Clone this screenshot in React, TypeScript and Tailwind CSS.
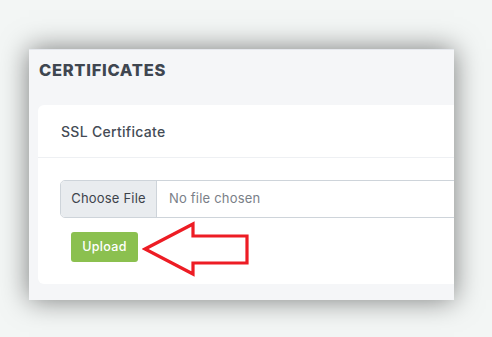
export default function App() {
    return (
        <div
            className="w-[492px] h-[337px] bg-[#f3f6f5] pt-[49px] pl-[29px] overflow-hidden"
            style={{ fontFamily: "Inter, 'Noto Sans', sans-serif" }}
        >
            <div className="relative w-[425px] h-[251px] bg-[#f5f6f8] border-t border-[#e6e9ee] shadow-[0_0_26px_rgba(0,0,0,0.5)] overflow-hidden">
                <h2 className="pl-[10px] pt-[10px] text-[16.5px] font-extrabold text-[#3f4650] tracking-[0.7px] leading-[20px]">
                    CERTIFICATES
                </h2>
                <div className="ml-[9px] mt-[25px] w-[480px] h-[179px] bg-white rounded-[6px]">
                    <div className="h-[53px] flex items-center pl-[23px] border-b border-[#eef0f3]">
                        <span className="text-[14px] font-medium text-[#444b55] tracking-[0.3px]">
                            SSL Certificate
                        </span>
                    </div>
                    <div className="pl-[22px] pt-[22px]">
                        <div className="flex h-[38px] border border-[#ced4da] rounded-[5px] overflow-hidden">
                            <div className="w-[96px] bg-[#e9ecef] border-r border-[#ced4da] flex items-center justify-center text-[13px] text-[#3d434b] tracking-[0.2px]">
                                Choose File
                            </div>
                            <div className="flex items-center pl-[12px] text-[13px] text-[#7a8088] tracking-[0.2px]">
                                No file chosen
                            </div>
                        </div>
                        <div className="pl-[11px] pt-[14px]">
                            <button className="w-[67px] h-[30px] bg-[#8bc04f] rounded-[3px] text-white text-[12.5px] font-medium tracking-[0.3px]">
                                Upload
                            </button>
                        </div>
                    </div>
                </div>
                <svg
                    className="absolute left-[113px] top-[171px]"
                    width="110"
                    height="56"
                    viewBox="0 0 110 56"
                >
                    <path
                        d="M3 28 L51 3 L51 15 L105 15 L105 42 L51 42 L51 53 Z"
                        fill="none"
                        stroke="#ed1c24"
                        strokeWidth="3.2"
                        strokeLinejoin="miter"
                    />
                </svg>
            </div>
        </div>
    );
}
